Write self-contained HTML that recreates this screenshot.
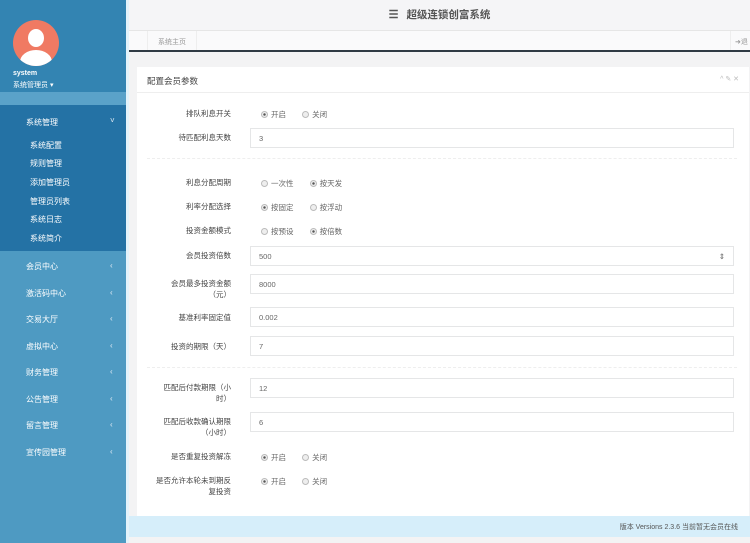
<!DOCTYPE html>
<html><head><meta charset="utf-8"><style>
*{margin:0;padding:0;box-sizing:border-box}
body{width:750px;height:543px;overflow:hidden;font-family:"Liberation Sans","Noto Sans CJK SC",sans-serif;font-size:8px;color:#555;background:#f3f3f4;position:relative}
.sb{position:absolute;left:0;top:0;width:126px;height:543px;background:#4e9ac2}
.top{position:absolute;left:0;top:0;width:126px;height:92px;background:#3384b2}
.band{position:absolute;left:0;top:92px;width:126px;height:13px;background:#5aa2c9}
.sub{position:absolute;left:0;top:105px;width:126px;height:146px;background:#2472a5}
.av{position:absolute;left:13px;top:20px;width:46px;height:46px;border-radius:50%;background:#f07a63;overflow:hidden}
.av:before{content:"";position:absolute;left:15px;top:9px;width:16px;height:18px;border-radius:50%;background:#fff}
.av:after{content:"";position:absolute;left:7px;top:30px;width:32px;height:24px;border-radius:50%;background:#fff}
.sb .t{position:absolute;color:#fff;font-size:8px;white-space:nowrap}
.arr{position:absolute;left:110px;color:#dfeaf3;font-size:8px}
.strip{position:absolute;left:126px;top:0;width:3px;height:543px;background:#e3f3fb}
.hd{position:absolute;left:129px;top:0;right:0;height:31px;background:#f5f5f7;border-bottom:1px solid #e6e6e6;text-align:center;line-height:30px;font-size:10.5px;color:#555;font-weight:bold}
.tabs{position:absolute;left:129px;top:31px;right:0;height:21px;background:#fafafb;border-bottom:2px solid #2f3a44}
.panel{position:absolute;left:137px;top:67px;width:612px;height:450px;background:#fff}
.ph{height:26px;border-bottom:1px solid #eee;padding:8px 10px;font-size:8.5px;color:#444}
.lab{position:absolute;right:518px;text-align:right;font-size:7.5px;color:#444;line-height:11px}
.inp{position:absolute;left:113px;width:484px;height:20px;border:1px solid #e5e6e7;font-size:7.5px;color:#666;padding:5px 8px}
.rad{position:absolute;left:124px;font-size:7.5px;color:#666}
.rad i{display:inline-block;width:7px;height:7px;border-radius:50%;border:1px solid #bbb;vertical-align:-1px;margin-right:3px;background:#eee}
.rad i.on{background:radial-gradient(#555 30%,#eee 40%)}
.hr{position:absolute;left:10px;right:12px;border-top:1px dashed #eee}
.ft{position:absolute;left:129px;top:516px;right:0;height:21px;background:#d6eefa;text-align:right;padding:6px 12px;font-size:7px;color:#555}
</style></head><body>
<div class="sb"><div class="top"></div><div class="band"></div><div class="sub"></div>
<div class="av"></div>
<div class="t" style="left:13px;top:70px;font-weight:bold;font-size:7px">system</div>
<div class="t" style="left:13px;top:80px;font-size:7px">系统管理员 ▾</div>
<div class="t" style="left:26px;top:117px">系统管理</div><div class="arr" style="top:116px">˅</div>
<div class="t" style="left:30px;top:140px">系统配置</div>
<div class="t" style="left:30px;top:158px">规则管理</div>
<div class="t" style="left:30px;top:177px">添加管理员</div>
<div class="t" style="left:30px;top:196px">管理员列表</div>
<div class="t" style="left:30px;top:214px">系统日志</div>
<div class="t" style="left:30px;top:233px">系统简介</div>
<div class="t" style="left:26px;top:261px">会员中心</div><div class="arr" style="top:261px">‹</div>
<div class="t" style="left:26px;top:288px">激活码中心</div><div class="arr" style="top:288px">‹</div>
<div class="t" style="left:26px;top:314px">交易大厅</div><div class="arr" style="top:314px">‹</div>
<div class="t" style="left:26px;top:341px">虚拟中心</div><div class="arr" style="top:341px">‹</div>
<div class="t" style="left:26px;top:367px">财务管理</div><div class="arr" style="top:367px">‹</div>
<div class="t" style="left:26px;top:394px">公告管理</div><div class="arr" style="top:394px">‹</div>
<div class="t" style="left:26px;top:420px">留言管理</div><div class="arr" style="top:420px">‹</div>
<div class="t" style="left:26px;top:447px">宣传园管理</div><div class="arr" style="top:447px">‹</div>
</div>
<div class="strip"></div>
<div class="hd"><span style="font-size:11px;margin-right:8px">☰</span>超级连锁创富系统</div>
<div class="tabs"><div style="position:absolute;left:18px;top:0;width:50px;height:19px;border-left:1px solid #eee;border-right:1px solid #eee;font-size:7px;color:#999;padding:6px 10px;white-space:nowrap">系统主页</div><div style="position:absolute;right:0;top:0;width:20px;height:19px;border-left:1px solid #eee;font-size:7px;color:#999;padding:6px 4px;white-space:nowrap;overflow:hidden">➜退</div></div>
<div class="panel">
<div class="ph">配置会员参数<span style="float:right;color:#bbb;font-size:7px">^ ✎ ✕</span></div>
<div class="lab" style="top:41px">排队利息开关</div><div class="rad" style="top:42px"><i class="on"></i>开启 <span style="margin-left:14px"><i></i>关闭</span></div>
<div class="lab" style="top:65px">待匹配利息天数</div><div class="inp" style="top:61px">3</div>
<div class="hr" style="top:91px"></div>
<div class="lab" style="top:110px">利息分配周期</div><div class="rad" style="top:111px"><i></i>一次性 <span style="margin-left:14px"><i class="on"></i>按天发</span></div>
<div class="lab" style="top:134px">利率分配选择</div><div class="rad" style="top:135px"><i class="on"></i>按固定 <span style="margin-left:14px"><i></i>按浮动</span></div>
<div class="lab" style="top:158px">投资金额模式</div><div class="rad" style="top:159px"><i></i>按预设 <span style="margin-left:14px"><i class="on"></i>按倍数</span></div>
<div class="lab" style="top:183px">会员投资倍数</div><div class="inp" style="top:179px">500<span style="float:right">⇕</span></div>
<div class="lab" style="top:211px">会员最多投资金额<br>（元）</div><div class="inp" style="top:207px">8000</div>
<div class="lab" style="top:245px">基准利率固定值</div><div class="inp" style="top:240px">0.002</div>
<div class="lab" style="top:274px">投资的期限（天）</div><div class="inp" style="top:269px">7</div>
<div class="hr" style="top:300px"></div>
<div class="lab" style="top:315px">匹配后付款期限（小<br>时）</div><div class="inp" style="top:311px">12</div>
<div class="lab" style="top:349px">匹配后收款确认期限<br>（小时）</div><div class="inp" style="top:345px">6</div>
<div class="lab" style="top:384px">是否重复投资解冻</div><div class="rad" style="top:385px"><i class="on"></i>开启 <span style="margin-left:14px"><i></i>关闭</span></div>
<div class="lab" style="top:408px">是否允许本轮未到期反<br>复投资</div><div class="rad" style="top:409px"><i class="on"></i>开启 <span style="margin-left:14px"><i></i>关闭</span></div>
</div>
<div class="ft">版本 Versions 2.3.6 当前暂无会员在线</div>
</body></html>
